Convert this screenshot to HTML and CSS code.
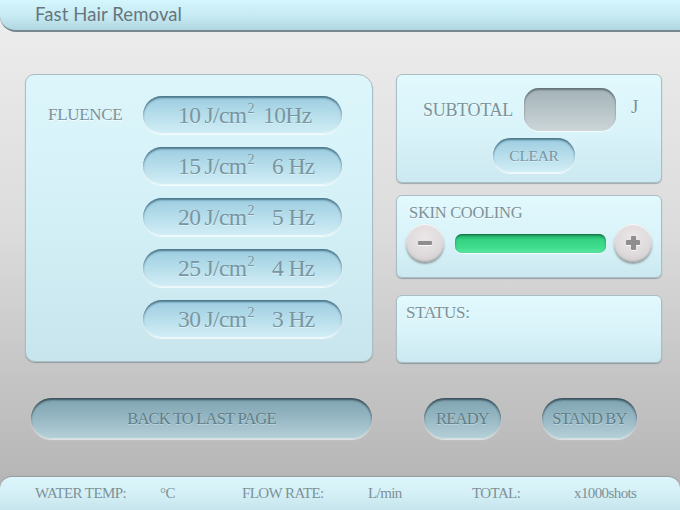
FILE: index.html
```html
<!DOCTYPE html>
<html>
<head>
<meta charset="utf-8">
<link rel="stylesheet" href="styles.css">
</head>
<body>
<div class="screen">
  <header class="header"><span class="title">Fast Hair Removal</span></header>
  <div class="main">
    <section class="panel fluence-panel">
      <div class="fluence-label">FLUENCE</div>
      <div class="fluence-list">
        <button class="pill"><span class="dose">10&thinsp;J/cm<sup>2</sup></span><span class="freq">10Hz</span></button>
        <button class="pill"><span class="dose">15&thinsp;J/cm<sup>2</sup></span><span class="freq f2">6 Hz</span></button>
        <button class="pill"><span class="dose">20&thinsp;J/cm<sup>2</sup></span><span class="freq f2">5 Hz</span></button>
        <button class="pill"><span class="dose">25&thinsp;J/cm<sup>2</sup></span><span class="freq f2">4 Hz</span></button>
        <button class="pill"><span class="dose">30&thinsp;J/cm<sup>2</sup></span><span class="freq f2">3 Hz</span></button>
      </div>
    </section>
    <div class="side">
      <section class="panel subtotal-panel">
        <div class="subtotal-row">
          <span class="label subtotal-label">SUBTOTAL</span>
          <span class="readout"></span>
          <span class="label unit">J</span>
        </div>
        <button class="pill clear">CLEAR</button>
      </section>
      <section class="panel cooling-panel">
        <div class="label cooling-label">SKIN COOLING</div>
        <div class="cooling-row">
          <button class="round minus"><span class="minus-bar"></span></button>
          <div class="level"></div>
          <button class="round plus"><span class="plus-h"></span><span class="plus-v"></span></button>
        </div>
      </section>
      <section class="panel status-panel">
        <div class="label">STATUS:</div>
      </section>
    </div>
  </div>
  <div class="actions">
    <button class="pill dark back">BACK TO LAST PAGE</button>
    <button class="pill dark ready">READY</button>
    <button class="pill dark standby">STAND BY</button>
  </div>
  <footer class="footer">
    <span>WATER TEMP:</span>
    <span>°C</span>
    <span>FLOW RATE:</span>
    <span>L/min</span>
    <span>TOTAL:</span>
    <span>x1000shots</span>
  </footer>
</div>
</body>
</html>
```
FILE: styles.css
```css
html, body {
  margin: 0;
  padding: 0;
}
body {
  width: 680px;
  height: 510px;
  overflow: hidden;
  font-family: "Liberation Serif", "Times New Roman", serif;
}
.screen {
  width: 680px;
  height: 510px;
  display: flex;
  flex-direction: column;
  background: linear-gradient(180deg, #efeeee 0%, #dcdcdc 45%, #c4c4c4 75%, #b2b2b2 100%);
}
.header {
  flex: none;
  background: linear-gradient(180deg, #d4f6fd 0%, #c6eaf3 55%, #b0d6e0 100%);
  border-bottom: 2px solid #76878d;
  border-bottom-left-radius: 16px;
  box-sizing: border-box;
  height: 32px;
  padding-left: 35px;
  display: flex;
  align-items: center;
}
.title {
  font-family: "Lato", "Open Sans", sans-serif;
  font-size: 18.5px;
  color: #66767c;
  letter-spacing: 0.1px;
  margin-top: -2px;
}
.main {
  display: flex;
  padding: 42px 0 0 25px;
  gap: 23px;
}
.panel {
  box-sizing: border-box;
  background: linear-gradient(180deg, #dcf6fb 0%, #d4f0f7 50%, #c8e4ec 100%);
  border: 1px solid #a9bdc3;
  box-shadow: 0 1px 1px rgba(80, 100, 110, 0.45);
}
.fluence-panel {
  width: 348px;
  height: 288px;
  border-radius: 9px 15px 10px 10px;
  display: flex;
  padding: 21px 0 0 22px;
}
.fluence-label {
  width: 95px;
  height: 38px;
  line-height: 38px;
  font-size: 17px;
  color: #7b929a;
  letter-spacing: -0.3px;
  text-shadow: 0 1px 0 rgba(255,255,255,0.7);
}
.fluence-list {
  display: flex;
  flex-direction: column;
  gap: 13px;
}
.pill {
  font-family: "Liberation Serif", "Times New Roman", serif;
  border: none;
  border-radius: 20px;
  background: linear-gradient(180deg, #9ccce0 0%, #b4dcea 45%, #d2eef6 100%);
  box-shadow: inset 0 2px 2px rgba(50, 90, 110, 0.75), inset 0 -1px 1px rgba(255,255,255,0.6), 0 1px 1px rgba(255,255,255,0.8);
  color: #7896a2;
  text-shadow: 0 1px 0 rgba(255,255,255,0.45);
  padding: 0;
  cursor: pointer;
}
.fluence-list .pill {
  width: 199px;
  height: 38px;
  display: flex;
  align-items: center;
  font-size: 23.5px;
  padding-left: 26px;
  box-sizing: border-box;
  letter-spacing: -0.6px;
  padding-top: 1px;
}
.dose {
  width: 94px;
  flex: none;
}
.dose sup {
  font-size: 14px;
  vertical-align: 0;
  position: relative;
  top: -10px;
  margin-left: 1px;
}
.freq.f2 {
  padding-left: 9px;
}
.side {
  width: 266px;
  display: flex;
  flex-direction: column;
}
.subtotal-panel,
.cooling-panel,
.status-panel {
  border-radius: 6px;
  background: linear-gradient(180deg, #e2f9fd 0%, #d8f3f9 55%, #cce8f0 100%);
}
.subtotal-panel {
  height: 109px;
  display: flex;
  flex-direction: column;
  align-items: center;
  padding-top: 13px;
}
.label {
  font-size: 17px;
  color: #7b929a;
  text-shadow: 0 1px 0 rgba(255,255,255,0.7);
  letter-spacing: -0.3px;
}
.subtotal-row {
  display: flex;
  align-items: center;
  width: 100%;
  box-sizing: border-box;
  padding-left: 26px;
}
.subtotal-label {
  width: 101px;
  font-size: 18px;
  margin-top: 1px;
}
.readout {
  width: 92px;
  height: 43px;
  border-radius: 15px;
  background: linear-gradient(180deg, #a4b3b8 0%, #b6c3c7 50%, #ccd6d9 100%);
  box-shadow: inset 0 2px 2px rgba(70, 85, 90, 0.7), 0 1px 1px rgba(255,255,255,0.8);
}
.unit {
  margin-left: 15px;
  margin-top: -6px;
  font-size: 19px;
}
.clear {
  width: 82px;
  height: 35px;
  font-size: 15.5px;
  margin-top: 7px;
  margin-left: 10px;
  border-radius: 18px;
  letter-spacing: -0.3px;
}
.cooling-panel {
  margin-top: 12px;
  height: 83px;
  padding: 7px 0 0 9px;
}
.cooling-label {
  font-size: 16.5px;
  padding-left: 3px;
}
.cooling-row {
  display: flex;
  align-items: center;
  margin-top: 1px;
}
.round {
  width: 38px;
  height: 38px;
  border-radius: 50%;
  border: none;
  padding: 0;
  position: relative;
  background: radial-gradient(circle at 50% 35%, #ebe7e8 0%, #dfdbdc 55%, #c9c5c6 100%);
  box-shadow: 0 2px 2px rgba(90, 95, 100, 0.55), inset 0 -1px 1px rgba(120,120,120,0.4), inset 0 1px 1px rgba(255,255,255,0.9);
  flex: none;
}
.minus-bar,
.plus-h,
.plus-v {
  position: absolute;
  background: #8f8d8e;
  box-shadow: 0 1px 0 rgba(255,255,255,0.8);
  border-radius: 1px;
}
.minus-bar {
  width: 14px;
  height: 4px;
  left: 12px;
  top: 17px;
}
.plus-h {
  width: 14px;
  height: 5px;
  left: 12px;
  top: 16px;
}
.plus-v {
  width: 5px;
  height: 14px;
  left: 16.5px;
  top: 11.5px;
}
.level {
  width: 151px;
  height: 19px;
  margin-left: 11px;
  margin-right: 8px;
  border-radius: 7px;
  background: linear-gradient(180deg, #1fa262 0%, #35d384 30%, #3fdc8c 70%, #5ae6a2 100%);
  box-shadow: inset 0 1px 2px rgba(10, 80, 40, 0.7), 0 1px 1px rgba(255,255,255,0.8);
}
.status-panel {
  margin-top: 17px;
  height: 68px;
  padding: 7px 0 0 9px;
}
.actions {
  display: flex;
  align-items: center;
  padding: 35px 0 0 31px;
}
.pill.dark {
  height: 41px;
  border-radius: 21px;
  background: linear-gradient(180deg, #7ea3b0 0%, #94b6c2 45%, #b6d0d8 100%);
  box-shadow: inset 0 2px 2px rgba(40, 60, 70, 0.8), inset 0 -1px 1px rgba(255,255,255,0.4), 0 1px 1px rgba(255,255,255,0.6);
  color: #607e89;
  text-shadow: 0 1px 0 rgba(255,255,255,0.35);
  font-size: 16.5px;
  letter-spacing: -0.8px;
}
.back {
  width: 341px;
}
.ready {
  width: 77px;
  margin-left: 52px;
}
.standby {
  width: 95px;
  margin-left: 41px;
}
.footer {
  margin-top: auto;
  height: 33px;
  box-sizing: border-box;
  border-radius: 12px 12px 0 0;
  background: linear-gradient(180deg, #dcf6fb 0%, #d2eef5 60%, #c6e4ec 100%);
  box-shadow: 0 -1px 1px rgba(120, 130, 135, 0.5);
  display: grid;
  grid-template-columns: 125px 82px 126px 104px 102px auto;
  align-items: center;
  padding-left: 35px;
  font-size: 15px;
  color: #7e9198;
  letter-spacing: -0.6px;
}
```
